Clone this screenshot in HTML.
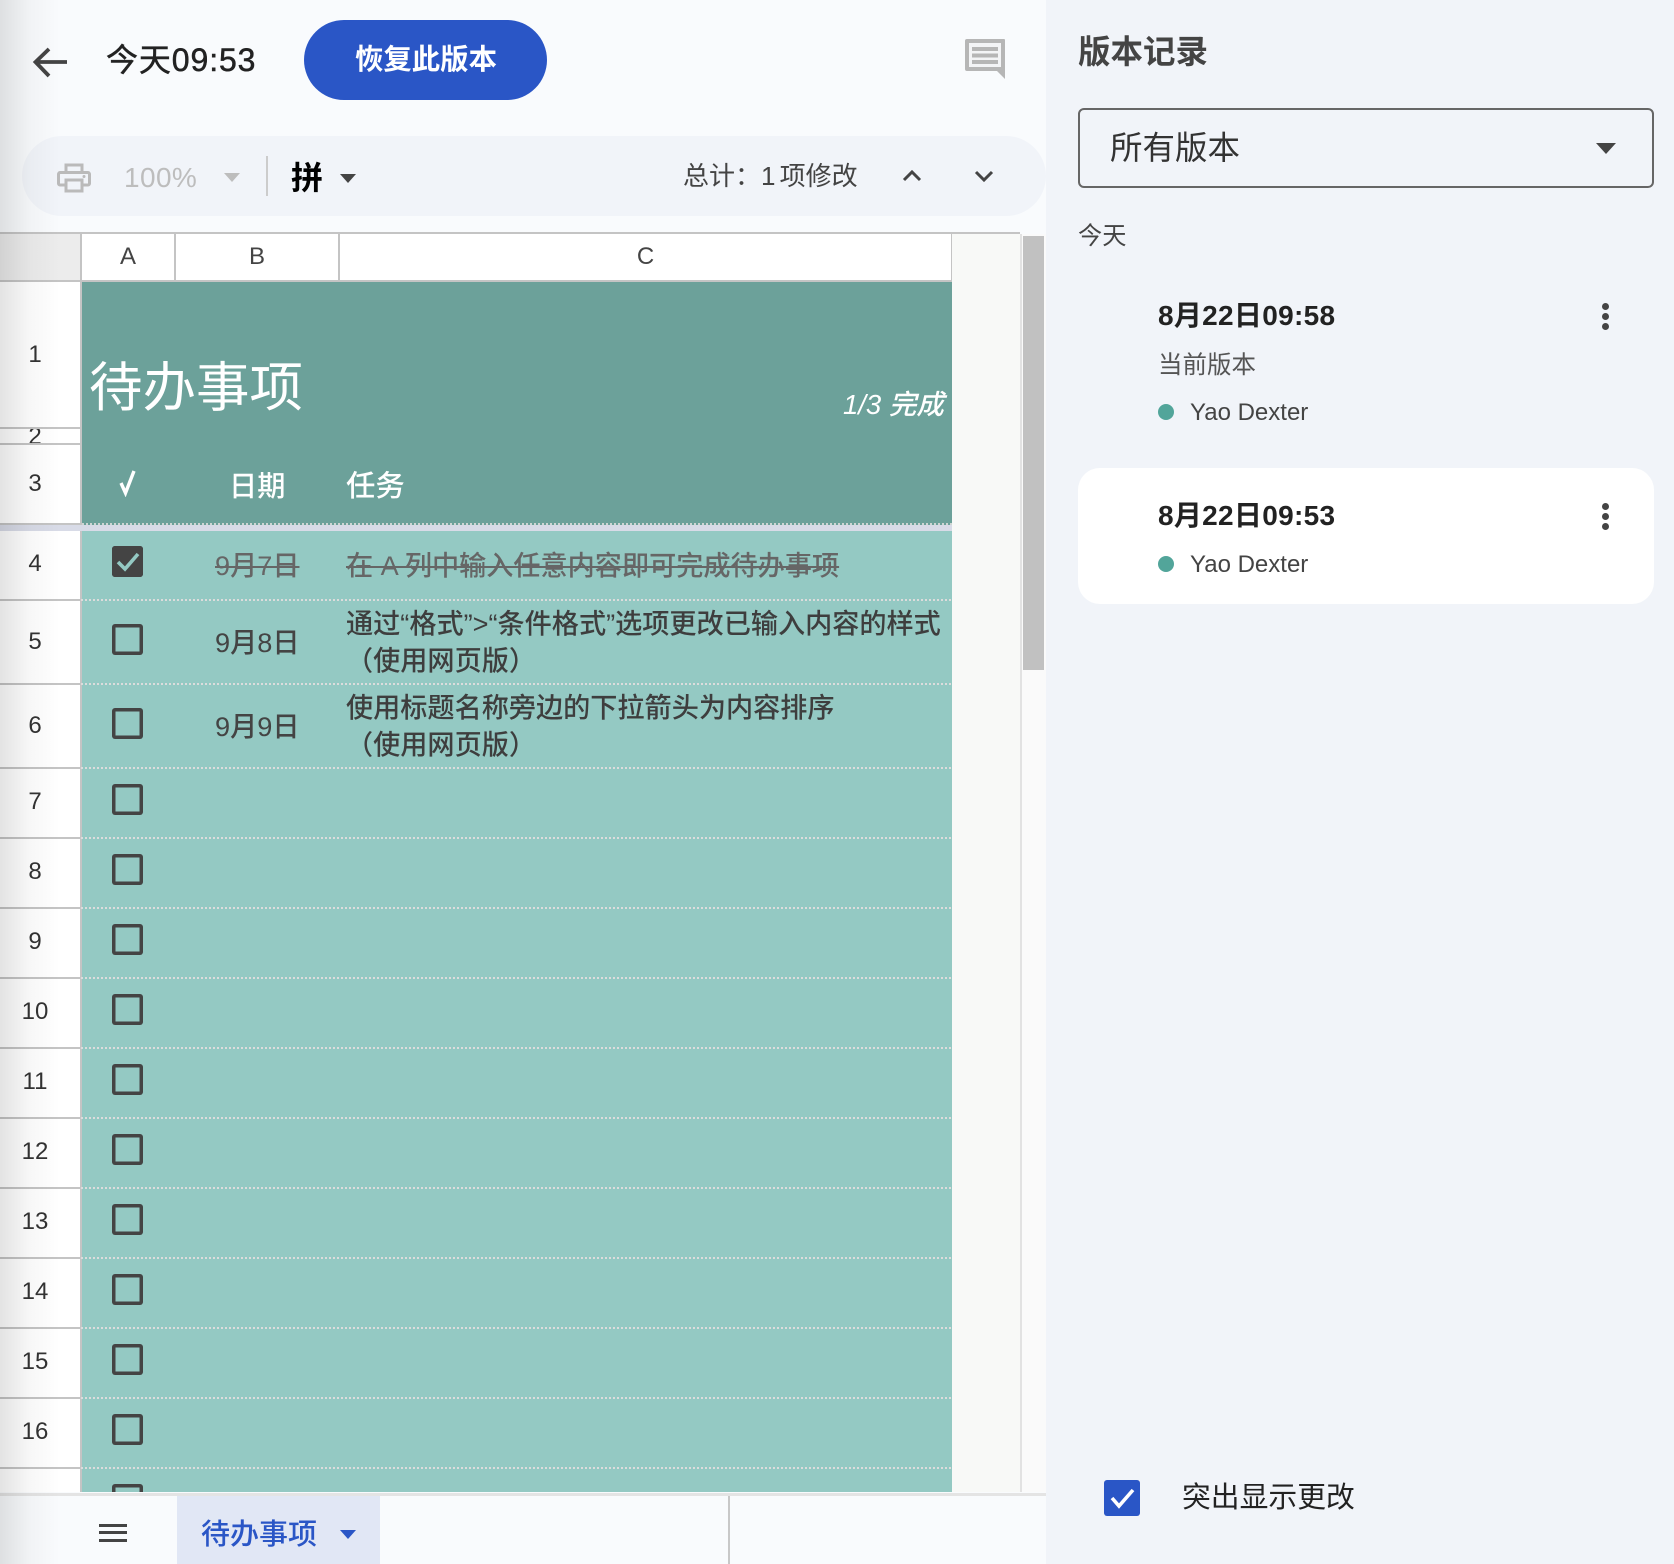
<!DOCTYPE html>
<html lang="zh">
<head>
<meta charset="utf-8">
<style>
html,body{margin:0;padding:0}
body{width:1674px;height:1564px;overflow:hidden;position:relative;background:#f9fbfd;font-family:"Liberation Sans","Noto Sans CJK SC",sans-serif;color:#333}
div,span,svg{position:absolute}
.t{white-space:nowrap;line-height:1}
.n{left:0;width:70px;text-align:center;font-size:24px;line-height:30px;color:#333}
.hl{left:0;width:80px;height:2px;background:#c4c4c4}
.dot{left:81px;width:871px;height:2px;background-image:linear-gradient(90deg,#dcdcdc 50%,transparent 50%);background-size:4px 2px}
.cb{left:112px;width:31px;height:31px;box-shadow:inset 0 0 0 3.500px #444;border-radius:3px}
.r{font-size:27.150px;color:#3e3e3e;left:346px;font-weight:500}
.d{font-size:27.150px;color:#444;left:215px;font-weight:500}
.k{width:7px;height:7px;border-radius:50%;background:#444;left:1602px}
.g{width:16px;height:16px;border-radius:50%;background:#52a59a;left:1158px}
.y{font-size:24px;color:#444;left:1190px}
.tm{font-size:28px;font-weight:bold;color:#222;left:1158px;letter-spacing:.3px}
</style>
</head>
<body>

<!-- right panel -->
<div style="left:1046px;top:0;width:628px;height:1564px;background:#f1f4f9"></div>

<!-- top bar -->
<svg style="left:30px;top:47px" width="40" height="32" viewBox="0 0 40 32"><path d="M37 15H7M19 2 5.500 15 19 29" fill="none" stroke="#444" stroke-width="3.800"/></svg>
<div class="t" style="left:106px;top:44px;font-size:32px;color:#222;letter-spacing:.9px;-webkit-text-stroke:.5px #222">今天09:53</div>
<div style="left:304px;top:20px;width:243px;height:80px;border-radius:40px;background:#2a56c6"></div>
<div class="t" style="left:355px;top:46px;font-size:28.400px;font-weight:bold;color:#fff">恢复此版本</div>
<svg style="left:964px;top:38px" width="42" height="42" viewBox="0 0 42 42"><path d="M3 1h37a1 1 0 0 1 1 1v39l-8-8H3a2 2 0 0 1-2-2V3a2 2 0 0 1 2-2z" fill="#b6b6b6"/><path d="M5 5h32v24H5z" fill="#f3f4f6"/><path d="M8 9h26v4H8zM8 15.500h26v4H8zM8 22h26v4H8z" fill="#b6b6b6"/></svg>

<!-- toolbar -->
<div style="left:22px;top:136px;width:1024px;height:80px;border-radius:40px;background:#f1f4f9"></div>
<svg style="left:57px;top:163px" width="34" height="30" viewBox="0 0 34 30"><path d="M9 9V2h16v7M9 22H3a1.500 1.500 0 0 1-1.500-1.500V11A2 2 0 0 1 3.500 9.500h27a2 2 0 0 1 2 1.500v9.500A1.500 1.500 0 0 1 31 22h-6M9 17h16v11H9z" fill="none" stroke="#bababa" stroke-width="3"/><circle cx="27" cy="13.500" r="1.500" fill="#bababa"/></svg>
<div class="t" style="left:124px;top:164px;font-size:28px;color:#bdbdbd;letter-spacing:.4px">100%</div>
<svg style="left:224px;top:173px" width="16" height="9"><path d="M0 0h16L8 9z" fill="#bdbdbd"/></svg>
<div style="left:266px;top:156px;width:2px;height:40px;background:#ccc"></div>
<div class="t" style="left:291px;top:162px;font-size:32px;font-weight:bold;color:#000">拼</div>
<svg style="left:340px;top:174px" width="16" height="9"><path d="M0 0h16L8 9z" fill="#444"/></svg>
<div class="t" style="left:683px;top:163px;font-size:26px;color:#444">总计：</div>
<div class="t" style="left:761px;top:163px;font-size:26px;color:#444;word-spacing:-3px">1 项修改</div>
<svg style="left:901px;top:168px" width="22" height="16"><path d="M3 12l8-8 8 8" fill="none" stroke="#444" stroke-width="3"/></svg>
<svg style="left:973px;top:168px" width="22" height="16"><path d="M3 4l8 8 8-8" fill="none" stroke="#444" stroke-width="3"/></svg>

<!-- grid -->
<div style="left:0;top:232px;width:1020px;height:2px;background:#c4c4c4"></div>
<div style="left:0;top:234px;width:80px;height:46px;background:#ececec"></div>
<div style="left:0;top:282px;width:80px;height:1210px;background:#fff"></div>
<div style="left:81px;top:234px;width:870px;height:46px;background:#fff"></div>
<div style="left:0;top:280px;width:952px;height:2px;background:#c4c4c4"></div>
<div style="left:80px;top:234px;width:2px;height:1258px;background:#c4c4c4"></div>
<div style="left:174px;top:234px;width:2px;height:46px;background:#c4c4c4"></div>
<div style="left:338px;top:234px;width:2px;height:46px;background:#c4c4c4"></div>
<div style="left:951px;top:234px;width:1px;height:46px;background:#c4c4c4"></div>
<div class="t" style="left:81px;width:94px;text-align:center;top:245px;font-size:24px;color:#444">A</div>
<div class="t" style="left:176px;width:162px;text-align:center;top:245px;font-size:24px;color:#444">B</div>
<div class="t" style="left:340px;width:611px;text-align:center;top:245px;font-size:24px;color:#444">C</div>

<div style="left:952px;top:234px;width:68px;height:1258px;background:#f8f9f7"></div>
<div style="left:1020px;top:234px;width:26px;height:1258px;background:#fafafa;border-left:2px solid #e2e2e2;box-sizing:border-box"></div>
<div style="left:1023px;top:236px;width:21px;height:434px;background:#c1c1c1"></div>

<!-- header band -->
<div style="left:82px;top:282px;width:870px;height:241px;background:#6ca19a"></div>
<div style="left:82px;top:523px;width:870px;height:2px;background-image:linear-gradient(90deg,#cfd6d4 50%,transparent 50%);background-size:4px 2px;background-color:#6ca19a"></div>
<div style="left:0;top:523px;width:82px;height:2px;background:#c4c4c4"></div>
<div style="left:0;top:525px;width:952px;height:6px;background:#d8dbe7"></div>
<div style="left:82px;top:531px;width:870px;height:961px;background:#94c9c3"></div>

<div class="t" style="left:89px;top:362px;font-size:53.500px;color:#fff">待办事项</div>
<div class="t" style="left:843px;top:391px;font-size:27.500px;color:#fff;font-style:italic;font-weight:500">1/3 完成</div>
<svg style="left:117px;top:469px" width="22" height="28" viewBox="0 0 22 28"><path d="M4 14l4.500 10L17 2" fill="none" stroke="#fff" stroke-width="3.400"/></svg>
<div class="t" style="left:229px;top:472px;font-size:28.200px;color:#fff;font-weight:500">日期</div>
<div class="t" style="left:346px;top:472px;font-size:29.400px;color:#fff;font-weight:500">任务</div>

<!-- row header lines -->
<div class="hl" style="top:427px"></div>
<div class="hl" style="top:443px"></div>
<div class="hl" style="top:599px"></div>
<div class="hl" style="top:683px"></div>
<div class="hl" style="top:767px"></div>
<div class="hl" style="top:837px"></div>
<div class="hl" style="top:907px"></div>
<div class="hl" style="top:977px"></div>
<div class="hl" style="top:1047px"></div>
<div class="hl" style="top:1117px"></div>
<div class="hl" style="top:1187px"></div>
<div class="hl" style="top:1257px"></div>
<div class="hl" style="top:1327px"></div>
<div class="hl" style="top:1397px"></div>
<div class="hl" style="top:1467px"></div>

<!-- row numbers -->
<div class="n" style="top:340px">1</div>
<div style="left:0;top:429px;width:70px;height:14px;overflow:hidden"><div class="n" style="top:-7px">2</div></div>
<div class="n" style="top:469px">3</div>
<div class="n" style="top:549px">4</div>
<div class="n" style="top:627px">5</div>
<div class="n" style="top:711px">6</div>
<div class="n" style="top:787px">7</div>
<div class="n" style="top:857px">8</div>
<div class="n" style="top:927px">9</div>
<div class="n" style="top:997px">10</div>
<div class="n" style="top:1067px">11</div>
<div class="n" style="top:1137px">12</div>
<div class="n" style="top:1207px">13</div>
<div class="n" style="top:1277px">14</div>
<div class="n" style="top:1347px">15</div>
<div class="n" style="top:1417px">16</div>

<!-- dotted row lines -->
<div class="dot" style="top:599px"></div>
<div class="dot" style="top:683px"></div>
<div class="dot" style="top:767px"></div>
<div class="dot" style="top:837px"></div>
<div class="dot" style="top:907px"></div>
<div class="dot" style="top:977px"></div>
<div class="dot" style="top:1047px"></div>
<div class="dot" style="top:1117px"></div>
<div class="dot" style="top:1187px"></div>
<div class="dot" style="top:1257px"></div>
<div class="dot" style="top:1327px"></div>
<div class="dot" style="top:1397px"></div>
<div class="dot" style="top:1467px"></div>

<!-- checkboxes -->
<div class="cb" style="top:546px;background:#444"></div>
<svg style="left:115px;top:550px" width="26" height="24" viewBox="0 0 26 24"><path d="M3 12l7 7L23 4" fill="none" stroke="#94c9c3" stroke-width="3.600"/></svg>
<div class="cb" style="top:624px"></div>
<div class="cb" style="top:708px"></div>
<div class="cb" style="top:784px"></div>
<div class="cb" style="top:854px"></div>
<div class="cb" style="top:924px"></div>
<div class="cb" style="top:994px"></div>
<div class="cb" style="top:1064px"></div>
<div class="cb" style="top:1134px"></div>
<div class="cb" style="top:1204px"></div>
<div class="cb" style="top:1274px"></div>
<div class="cb" style="top:1344px"></div>
<div class="cb" style="top:1414px"></div>
<div style="left:82px;top:1468px;width:870px;height:24px;overflow:hidden"><div class="cb" style="left:30px;top:16px"></div></div>

<!-- row text -->
<div class="t d" style="top:552px;color:#666;text-decoration:line-through;text-decoration-thickness:2px">9月7日</div>
<div class="t r" style="top:552px;color:#666;text-decoration:line-through;text-decoration-thickness:2px">在 A 列中输入任意内容即可完成待办事项</div>
<div class="t d" style="top:629px">9月8日</div>
<div class="t r" style="top:610px">通过“格式”&gt;“条件格式”选项更改已输入内容的样式</div>
<div class="t r" style="top:647px">（使用网页版）</div>
<div class="t d" style="top:713px">9月9日</div>
<div class="t r" style="top:694px">使用标题名称旁边的下拉箭头为内容排序</div>
<div class="t r" style="top:731px">（使用网页版）</div>

<!-- bottom bar -->
<div style="left:0;top:1492px;width:1046px;height:72px;background:#f9fbfd"></div>
<div style="left:0;top:1493px;width:1046px;height:3px;background:#e4e4e4"></div>
<div style="left:99px;top:1524px;width:28px;height:3px;background:#444"></div>
<div style="left:99px;top:1531px;width:28px;height:3px;background:#444"></div>
<div style="left:99px;top:1539px;width:28px;height:3px;background:#444"></div>
<div style="left:177px;top:1496px;width:203px;height:68px;background:#e1e7f5"></div>
<div class="t" style="left:201px;top:1521px;font-size:29px;color:#2a56c6;font-weight:500">待办事项</div>
<svg style="left:340px;top:1530px" width="16" height="9"><path d="M0 0h16L8 9z" fill="#2a56c6"/></svg>
<div style="left:728px;top:1496px;width:2px;height:68px;background:#c8c8c8"></div>

<!-- left edge shadow -->
<div style="left:0;top:0;width:60px;height:1564px;background:linear-gradient(90deg,rgba(0,0,0,.11),rgba(0,0,0,.03) 50%,rgba(0,0,0,0))"></div>

<!-- right panel content -->
<div class="t" style="left:1078px;top:36px;font-size:32.500px;font-weight:bold;color:#444">版本记录</div>
<div style="left:1078px;top:108px;width:576px;height:80px;box-sizing:border-box;border:2px solid #666;border-radius:6px"></div>
<div class="t" style="left:1110px;top:132px;font-size:32.500px;color:#333">所有版本</div>
<svg style="left:1596px;top:143px" width="20" height="11"><path d="M0 0h20L10 11z" fill="#444"/></svg>
<div class="t" style="left:1078px;top:225px;font-size:24.200px;color:#444">今天</div>

<div class="t tm" style="top:302px">8月22日09:58</div>
<div class="k" style="top:302.500px"></div>
<div class="k" style="top:312.500px"></div>
<div class="k" style="top:322.500px"></div>
<div class="t" style="left:1158px;top:354px;font-size:24.500px;color:#555">当前版本</div>
<div class="g" style="top:404px"></div>
<div class="t y" style="top:401px">Yao Dexter</div>

<div style="left:1078px;top:468px;width:576px;height:136px;border-radius:22px;background:#fff"></div>
<div class="t tm" style="top:502px">8月22日09:53</div>
<div class="k" style="top:502.500px"></div>
<div class="k" style="top:512.500px"></div>
<div class="k" style="top:522.500px"></div>
<div class="g" style="top:556px"></div>
<div class="t y" style="top:553px">Yao Dexter</div>

<div style="left:1104px;top:1480px;width:36px;height:36px;border-radius:3px;background:#2a56c6"></div>
<svg style="left:1104px;top:1480px" width="36" height="36" viewBox="0 0 36 36"><path d="M8 18l7 8 14-16" fill="none" stroke="#fff" stroke-width="3.600"/></svg>
<div class="t" style="left:1182px;top:1484px;font-size:28.800px;color:#222">突出显示更改</div>

</body>
</html>
